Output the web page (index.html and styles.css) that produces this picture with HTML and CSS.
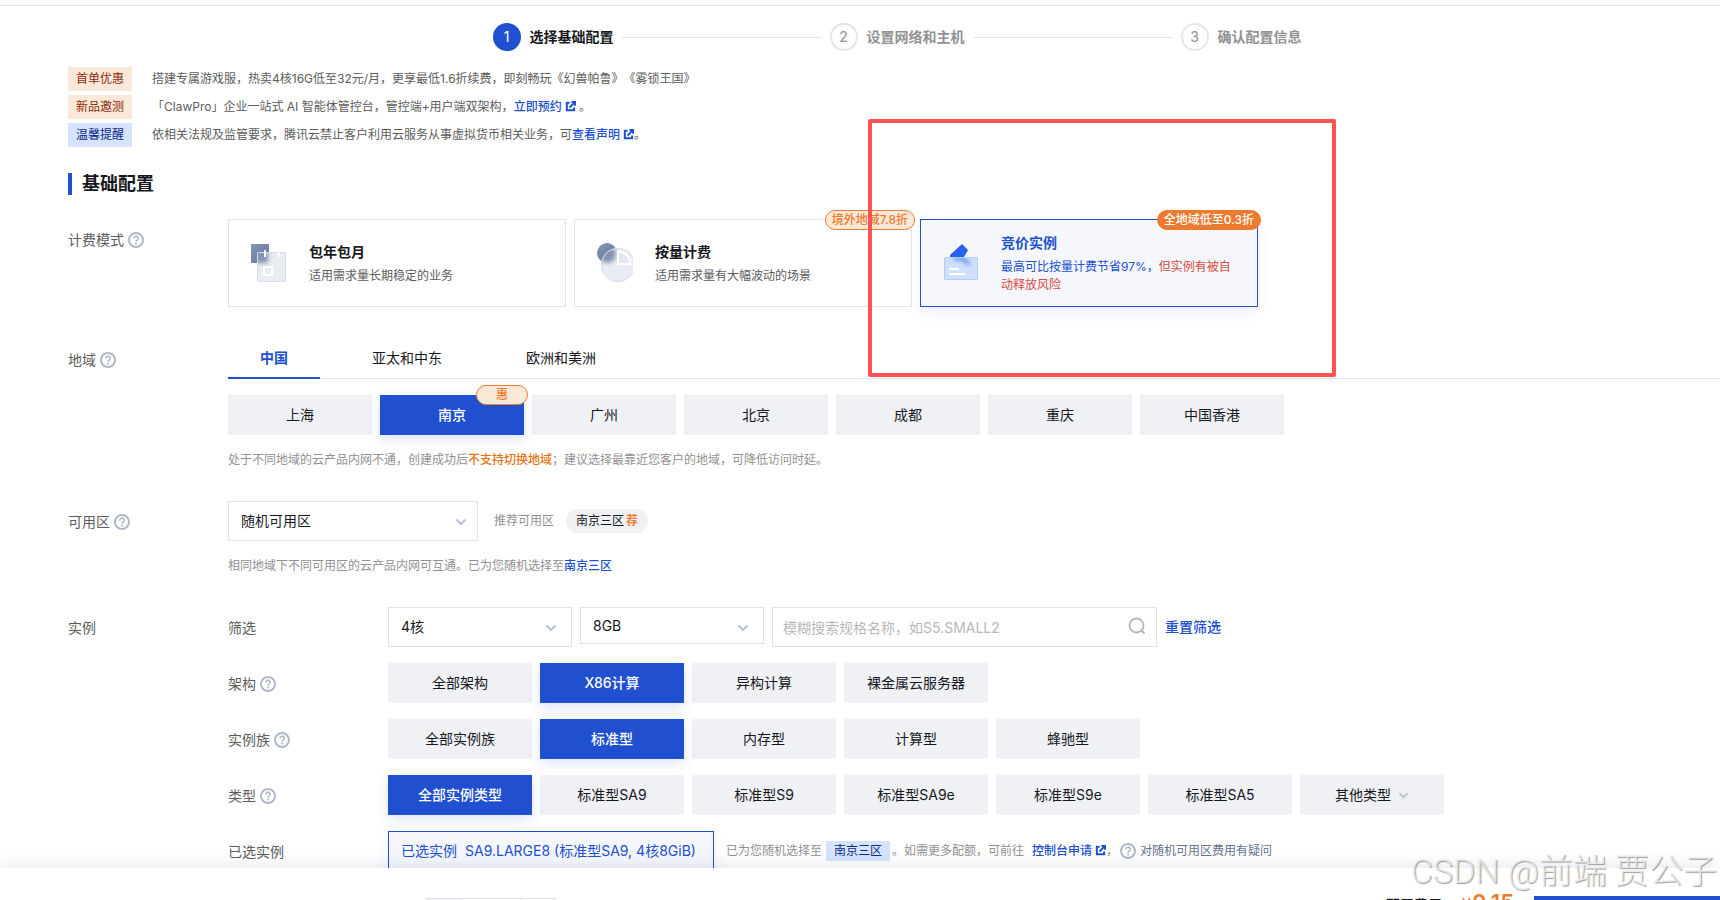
FILE: index.html
```html
<!DOCTYPE html>
<html lang="zh-CN">
  <head>
    <meta charset="utf-8" />
    <meta name="viewport" content="width=device-width, initial-scale=1" />
    <title>云服务器 - 选择基础配置</title>
    <link rel="stylesheet" href="styles.css" />
  </head>

  <body>
    <!-- Shared icons -->
    <svg class="sprite" aria-hidden="true">
      <symbol id="icon-help" viewBox="0 0 16 16">
        <circle cx="8" cy="8" r="7" fill="none" stroke="currentColor" stroke-width="2" />
        <path d="M5.8 6.400a2.200 2.200 0 1 1 3.300 1.900c-.8.4-1.100.7-1.100 1.500" fill="none" stroke="currentColor" stroke-width="1.600" />
        <rect x="7" y="10.800" width="2" height="1.600" fill="currentColor" />
      </symbol>
      <symbol id="icon-arrow" viewBox="0 0 12 12">
        <path d="M1.500 3.500 6 8l4.500-4.500" fill="none" stroke="currentColor" stroke-width="2" />
      </symbol>
      <symbol id="icon-link" viewBox="0 0 12 12">
        <path d="M5 2H2v8h8V7" fill="none" stroke="currentColor" stroke-width="2.200" />
        <path d="M7 1.100h4v4M10.500 1.500 5 7" fill="none" stroke="currentColor" stroke-width="2.200" />
      </symbol>
      <symbol id="icon-search" viewBox="0 0 18 18">
        <circle cx="8.500" cy="8.500" r="7" fill="none" stroke="currentColor" stroke-width="1.800" />
        <path d="m13.500 13.500 3 3" fill="none" stroke="currentColor" stroke-width="2" />
      </symbol>
    </svg>

    <main class="main">
      <ol class="steps">
        <li class="step active"><span class="num">1</span>选择基础配置</li>
        <li class="step"><span class="num">2</span>设置网络和主机</li>
        <li class="step"><span class="num">3</span>确认配置信息</li>
      </ol>

      <div class="content">
        <div class="notices">
          <div class="notice">
            <span class="tag orange">首单优惠</span>
            <p>搭建专属游戏服，热卖4核16G低至32元/月，更享最低1.6折续费，即刻畅玩《幻兽帕鲁》《雾锁王国》</p>
          </div>
          <div class="notice">
            <span class="tag orange">新品邀测</span>
            <p>「ClawPro」企业一站式 AI 智能体管控台，管控端+用户端双架构，<a href="#">立即预约<svg class="icon-link"><use href="#icon-link" /></svg></a> 。</p>
          </div>
          <div class="notice">
            <span class="tag">温馨提醒</span>
            <p>依相关法规及监管要求，腾讯云禁止客户利用云服务从事虚拟货币相关业务，可<a href="#">查看声明<svg class="icon-link"><use href="#icon-link" /></svg></a>。</p>
          </div>
        </div>

        <h2 class="title">基础配置</h2>

        <div class="row">
          <div class="label">计费模式<svg class="help"><use href="#icon-help" /></svg></div>
          <div class="cards">
            <button class="card">
              <svg class="card-icon" viewBox="0 0 36 40">
                <defs>
                  <linearGradient id="slate" x1="0" y1="0" x2="1" y2="1">
                    <stop offset="0" stop-color="#8494b5" />
                    <stop offset="1" stop-color="#66779d" />
                  </linearGradient>
                  <filter id="soft" x="-50%" y="-50%" width="200%" height="200%">
                    <feGaussianBlur stdDeviation="2" />
                  </filter>
                  <clipPath id="page"><rect x="6" y="9" width="29" height="30" rx="1" /></clipPath>
                </defs>
                <rect width="18" height="19" y="1" rx="1" fill="url(#slate)" />
                <rect x="6" y="9" width="29" height="30" rx="1" fill="#e9edf3" />
                <rect x="0" y="3" width="17" height="17" fill="#8493b3" filter="url(#soft)" clip-path="url(#page)" />
                <rect x="6.500" y="9.500" width="28" height="29" rx="1" fill="none" stroke="#d7deea" />
                <path d="M14 7v7M28 7v7" stroke="#fff" stroke-width="2" />
                <rect x="13" y="24" width="8" height="8" fill="none" stroke="#fff" stroke-width="2" />
              </svg>
              <span class="card-text">
                <strong>包年包月</strong>
                <span>适用需求量长期稳定的业务</span>
              </span>
            </button>
            <button class="card">
              <svg class="card-icon" viewBox="0 0 36 40">
                <defs>
                  <clipPath id="disc"><circle cx="21" cy="22" r="17" /></clipPath>
                </defs>
                <circle cx="10" cy="10" r="10" fill="url(#slate)" />
                <circle cx="21" cy="22" r="17" fill="#e9edf3" />
                <circle cx="10" cy="11" r="9" fill="#8493b3" filter="url(#soft)" clip-path="url(#disc)" />
                <circle cx="21" cy="22" r="16.500" fill="none" stroke="#d7deea" />
                <path d="M21 8.500V21h12.500A13 13 0 0 0 21 8.500z" fill="#e2e7f0" stroke="#fff" stroke-width="2" />
              </svg>
              <span class="card-text">
                <strong>按量计费</strong>
                <span>适用需求量有大幅波动的场景</span>
              </span>
              <span class="badge">境外地域7.8折</span>
            </button>
            <button class="card active">
              <svg class="card-icon" viewBox="0 0 36 40">
                <defs>
                  <clipPath id="paper"><rect x="1" y="14" width="34" height="23" rx="1" /></clipPath>
                </defs>
                <path d="m19 1 6 6-4 7H7v-2z" fill="#2563eb" />
                <rect x="1" y="14" width="34" height="23" rx="1" fill="#cfe0fb" />
                <path d="M10 14h11l7 7-3 1-7-5-6 1z" fill="#5b8df0" filter="url(#soft)" clip-path="url(#paper)" />
                <rect x="1.500" y="14.500" width="33" height="22" rx="1" fill="none" stroke="#b3cdf8" />
                <path d="M6 26h10M6 31h16" stroke="#fff" stroke-width="2" />
              </svg>
              <span class="card-text">
                <strong>竞价实例</strong>
                <span>最高可比按量计费节省97%，<em>但实例有被自动释放风险</em></span>
              </span>
              <span class="badge solid">全地域低至0.3折</span>
            </button>
          </div>
        </div>

        <div class="row">
          <div class="label">地域<svg class="help"><use href="#icon-help" /></svg></div>
          <div>
            <div class="tabs">
              <button class="tab active">中国</button>
              <button class="tab">亚太和中东</button>
              <button class="tab">欧洲和美洲</button>
            </div>
            <div class="options">
              <button class="option">上海</button>
              <button class="option active">南京<span class="badge wide">惠</span></button>
              <button class="option">广州</button>
              <button class="option">北京</button>
              <button class="option">成都</button>
              <button class="option">重庆</button>
              <button class="option">中国香港</button>
            </div>
            <p class="hint">处于不同地域的云产品内网不通，创建成功后<b>不支持切换地域</b>；建议选择最靠近您客户的地域，可降低访问时延。</p>
          </div>
        </div>

        <div class="row">
          <label class="label" for="zone">可用区<svg class="help"><use href="#icon-help" /></svg></label>
          <div>
            <div class="zone">
              <div class="select zone-select">
                <select id="zone">
                  <option>随机可用区</option>
                </select>
                <svg class="arrow"><use href="#icon-arrow" /></svg>
              </div>
              <span class="zone-tip">推荐可用区</span>
              <button class="pill">南京三区<b>荐</b></button>
            </div>
            <p class="hint">相同地域下不同可用区的云产品内网可互通。已为您随机选择至<a href="#">南京三区</a></p>
          </div>
        </div>

        <div class="row">
          <div class="label">实例</div>
          <div class="instance">
            <div class="row">
              <label class="label" for="cpu">筛选</label>
              <div class="filters">
                <div class="select">
                  <select id="cpu">
                    <option>4核</option>
                  </select>
                  <svg class="arrow"><use href="#icon-arrow" /></svg>
                </div>
                <div class="select short">
                  <select aria-label="内存">
                    <option>8GB</option>
                  </select>
                  <svg class="arrow"><use href="#icon-arrow" /></svg>
                </div>
                <div class="search">
                  <input type="text" aria-label="搜索规格" placeholder="模糊搜索规格名称，如S5.SMALL2" />
                  <svg class="icon-search"><use href="#icon-search" /></svg>
                </div>
                <a class="reset" href="#">重置筛选</a>
              </div>
            </div>

            <div class="row">
              <div class="label">架构<svg class="help"><use href="#icon-help" /></svg></div>
              <div class="options">
                <button class="option">全部架构</button>
                <button class="option active">X86计算</button>
                <button class="option">异构计算</button>
                <button class="option">裸金属云服务器</button>
              </div>
            </div>

            <div class="row">
              <div class="label">实例族<svg class="help"><use href="#icon-help" /></svg></div>
              <div class="options">
                <button class="option">全部实例族</button>
                <button class="option active">标准型</button>
                <button class="option">内存型</button>
                <button class="option">计算型</button>
                <button class="option">蜂驰型</button>
              </div>
            </div>

            <div class="row">
              <div class="label">类型<svg class="help"><use href="#icon-help" /></svg></div>
              <div class="options">
                <button class="option active">全部实例类型</button>
                <button class="option">标准型SA9</button>
                <button class="option">标准型S9</button>
                <button class="option">标准型SA9e</button>
                <button class="option">标准型S9e</button>
                <button class="option">标准型SA5</button>
                <button class="option">其他类型<svg class="option-arrow"><use href="#icon-arrow" /></svg></button>
              </div>
            </div>

            <div class="row">
              <div class="label">已选实例</div>
              <div class="selected">
                <div class="selected-box"><span>已选实例</span><span>SA9.LARGE8 (标准型SA9, 4核8GiB)</span></div>
                <p class="selected-tip">
                  已为您随机选择至<span class="tag small">南京三区</span>。如需更多配额，可前往<a class="apply" href="#">控制台申请<svg class="icon-link"><use href="#icon-link" /></svg></a>，
                </p>
                <button class="question"><svg class="help"><use href="#icon-help" /></svg>对随机可用区费用有疑问</button>
              </div>
            </div>
          </div>
        </div>
      </div>
    </main>

    <footer class="footer">
      <div class="stepper">
        <button aria-label="减少"></button>
        <input type="text" aria-label="数量" />
        <button aria-label="增加"></button>
      </div>
      <div class="cost">
        <span>配置费用</span>
        <span class="price"><small>¥</small>0.15</span>
      </div>
      <button class="next" aria-label="下一步"></button>
    </footer>

    <div class="marker"></div>
    <div class="watermark">CSDN @前端 贾公子</div>
  </body>
</html>
```

FILE: styles.css
```css
* {
  box-sizing: border-box;
}

body {
  display: flex;
  flex-direction: column;
  height: 100vh;
  margin: 0;
  position: relative;
  overflow: hidden;
  background: #fff;
  color: #16181d;
  font-family: Inter, "Noto Sans CJK SC", sans-serif;
  font-size: 14px;
  line-height: 20px;
  text-spacing-trim: space-all;
}

button,
input,
select {
  border: 0;
  border-radius: 0;
  padding: 0;
  margin: 0;
  background: none;
  color: inherit;
  font: inherit;
}

button {
  cursor: pointer;
}

p {
  margin: 0;
}

a {
  color: #2050d0;
  font-weight: 500;
  text-decoration: none;
}

.sprite {
  position: absolute;
  width: 0;
  height: 0;
}

.main {
  flex: 1;
  min-height: 0;
  overflow: hidden;
  padding-top: 5px;
}

.content {
  padding-left: 68px;
}

/* Steps */
.steps {
  display: flex;
  justify-content: center;
  margin: 0;
  padding: 17px 0 16px 74px;
  border-top: 1px solid #e0e1e3;
  list-style: none;
}

.step {
  display: flex;
  align-items: center;
  color: #919191;
  font-weight: 700;
}

.step.active {
  color: #16181d;
}

/* line between two steps */
.step + .step::before {
  content: "";
  width: 200px;
  height: 1px;
  margin: 0 8px;
  background: #e3e5e9;
}

.num {
  display: flex;
  align-items: center;
  justify-content: center;
  width: 28px;
  height: 28px;
  margin-right: 9px;
  border: 2px solid #e3e6ed;
  border-radius: 50%;
  font-weight: 400;
}

.step.active .num {
  border-color: #2050d0;
  background: #2050d0;
  color: #fff;
}

/* Notices */
.notices {
  display: flex;
  flex-direction: column;
  gap: 4px;
}

.notice {
  display: flex;
  gap: 20px;
  color: #5c5c5c;
  font-size: 12px;
  line-height: 24px;
}

.tag {
  padding: 0 8px;
  background: #d5e3fc;
  color: #0a2a8c;
  font-size: 12px;
  line-height: 24px;
}

.tag.orange {
  background: #fae8d8;
  color: #8c2d0c;
}

.tag.small {
  display: inline-block;
  margin: 0 2px 0 4px;
  line-height: 20px;
}

.icon-link {
  width: 11px;
  height: 11px;
  margin-left: 3px;
  vertical-align: -1px;
}

.title {
  margin: 26px 0 24px;
  padding-left: 10px;
  border-left: 4px solid #2050d0;
  font-size: 18px;
  line-height: 22px;
}

/* Form rows */
.row {
  display: grid;
  grid-template-columns: 160px 1fr;
  margin-bottom: 32px;
}

.label {
  display: flex;
  align-items: center;
  align-self: start;
  padding-top: 11px;
  color: #5c5c5c;
}

.help {
  width: 16px;
  height: 16px;
  margin-left: 4px;
  color: #b1b8c8;
}

.hint {
  margin-top: 16px;
  color: #919191;
  font-size: 12px;
  line-height: 18px;
}

.hint b {
  color: #e8710f;
  font-weight: 500;
}

/* Billing cards */
.cards {
  display: flex;
  gap: 8px;
}

.card {
  display: flex;
  align-items: center;
  position: relative;
  width: 338px;
  height: 88px;
  padding: 0 24px 0 22px;
  border: 1px solid #e3e4e6;
  text-align: left;
}

.card.active {
  border-color: #2050d0;
  background: #f6f7fd;
  box-shadow: 0 6px 12px rgba(32, 80, 208, 0.08);
  color: #2050d0;
}

.card-icon {
  flex: none;
  width: 36px;
  height: 40px;
  margin-right: 22px;
}

.card-text {
  color: #5c5c5c;
  font-size: 12px;
  line-height: 18px;
}

.card-text strong {
  display: block;
  margin-bottom: 5px;
  color: #16181d;
  font-size: 14px;
  line-height: 20px;
}

.card.active span,
.card.active strong {
  color: #2050d0;
}

.card-text em {
  color: #d54941;
  font-style: normal;
}

.badge {
  position: absolute;
  top: -10px;
  right: -4px;
  height: 20px;
  padding: 0 6px;
  border: 1px solid #ed7b2f;
  border-radius: 10px;
  background: #fbe9d8;
  color: #ed7b2f;
  font-size: 12px;
  font-weight: 500;
  line-height: 18px;
}

.card.active .badge.solid {
  background: #ed7b2f;
  color: #fff;
}

.badge.wide {
  padding: 0 19px;
}

/* Region tabs */
.tabs {
  display: flex;
  gap: 20px;
  height: 40px;
  margin-bottom: 16px;
  border-bottom: 1px solid #e4e6ee;
}

.tab {
  height: 40px;
  padding: 0 32px;
  border-bottom: 2px solid transparent;
}

.tab.active {
  border-color: #2050d0;
  color: #2050d0;
  font-weight: 700;
}

.options {
  display: flex;
  gap: 8px;
}

.option {
  position: relative;
  width: 144px;
  height: 40px;
  background: #f0f1f5;
}

.option.active {
  z-index: 1;
  background: #2050d0;
  box-shadow: 0 4px 12px rgba(32, 80, 208, 0.16);
  color: #fff;
  font-weight: 500;
}

.option-arrow {
  width: 11px;
  height: 11px;
  margin-left: 7px;
  color: #b9c0d0;
  vertical-align: -1px;
}

/* Zone and filters */
.zone {
  display: flex;
  align-items: center;
}

.select {
  position: relative;
  width: 184px;
  height: 40px;
}

.select.short {
  height: 37px;
}

.zone-select {
  width: 250px;
}

.select select {
  width: 100%;
  height: 100%;
  padding: 0 12px;
  border: 1px solid #e0e2e7;
  background: #fff;
  appearance: none;
}

.arrow {
  position: absolute;
  right: 11px;
  bottom: 13px;
  width: 12px;
  height: 12px;
  color: #b9c0d0;
  pointer-events: none;
}

.filters .arrow {
  right: 15px;
}

.short .arrow {
  bottom: 10px;
}

.zone-tip {
  margin: 0 12px 0 16px;
  color: #919191;
  font-size: 12px;
}

.pill {
  height: 24px;
  padding: 0 10px;
  border-radius: 12px;
  background: #f0f1f5;
  font-size: 12px;
}

.pill b {
  margin-left: 2px;
  color: #ed7b2f;
}

.instance .row {
  margin-bottom: 16px;
}

.filters {
  display: flex;
  gap: 8px;
}

.search {
  position: relative;
  width: 385px;
  height: 40px;
}

.search input {
  width: 100%;
  height: 100%;
  padding: 0 36px 0 10px;
  border: 1px solid #e0e2e7;
}

.search input::placeholder {
  color: #b8b8b8;
  opacity: 1;
}

.icon-search {
  position: absolute;
  top: 10px;
  right: 11px;
  width: 18px;
  height: 18px;
  color: #b1b8c8;
}

.reset {
  line-height: 40px;
}

/* Selected instance */
.selected {
  display: flex;
  align-items: center;
}

.selected-box {
  display: flex;
  align-items: center;
  gap: 8px;
  width: 326px;
  height: 40px;
  padding: 0 12px;
  border: 1px solid #2050d0;
  background: #f6f7fd;
  box-shadow: 0 4px 12px rgba(32, 80, 208, 0.08);
  color: #2050d0;
  white-space: nowrap;
}

.selected-tip {
  margin-left: 12px;
  color: #919191;
  font-size: 12px;
}

.apply {
  margin-left: 8px;
}

.question {
  display: flex;
  align-items: center;
  gap: 4px;
  color: #66718f;
  font-size: 12px;
}

.question .help {
  margin-left: 2px;
}

/* Bottom bar, its lower part runs off the window */
.footer {
  display: flex;
  align-items: flex-start;
  position: relative;
  z-index: 2;
  height: 32px;
  padding: 28px 0 0 426px;
  background: #fff;
  box-shadow: 0 0 18px rgba(40, 60, 110, 0.16);
}

.stepper {
  display: flex;
  margin-top: 2px;
  border: 1px solid #dcdfe5;
}

.stepper button {
  width: 34px;
  height: 30px;
  background: #f3f4f7;
}

.stepper button:last-child {
  background: #fff;
}

.stepper input {
  width: 60px;
  border: solid #dcdfe5;
  border-width: 0 1px;
}

.cost {
  display: flex;
  align-items: flex-start;
  gap: 20px;
  margin: -4px 20px 0 auto;
  font-weight: 500;
}

.cost > span:first-child {
  padding-top: 3px;
}

.price {
  color: #ed7b2f;
  font-size: 22px;
  font-weight: 600;
}

.price small {
  margin-right: 1px;
  font-size: 16px;
  font-weight: 400;
}

.next {
  width: 186px;
  height: 40px;
  background: #2050d0;
}

/* Red frame round the spot instance card */
.marker {
  position: absolute;
  z-index: 3;
  top: 119px;
  left: 868px;
  width: 468px;
  height: 258px;
  border: 4px solid #ff5252;
  border-radius: 2px;
  pointer-events: none;
}

.watermark {
  position: absolute;
  z-index: 4;
  right: 3px;
  bottom: 9px;
  color: rgba(240, 240, 240, 0.8);
  font-family: Roboto, "Noto Sans CJK SC", sans-serif;
  font-size: 34px;
  font-weight: 300;
  line-height: 40px;
  text-shadow: 1px 1px 1px rgba(90, 90, 90, 0.6);
  pointer-events: none;
}
```
